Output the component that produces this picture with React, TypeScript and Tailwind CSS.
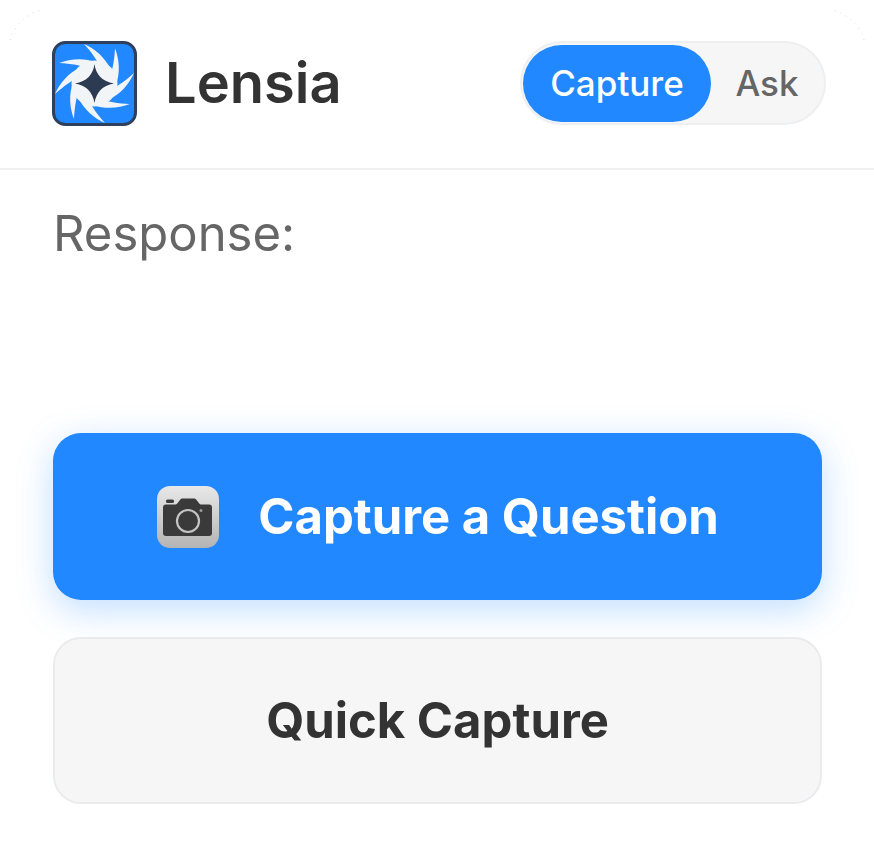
const font = { fontFamily: "Inter, 'Noto Sans', sans-serif" };

function Logo() {
  return (
    <svg width="85" height="85" viewBox="0 0 85 85" className="shrink-0">
      <defs>
        <clipPath id="logo-clip">
          <rect x="1.5" y="1.5" width="82" height="82" rx="12" />
        </clipPath>
      </defs>
      <rect x="1.5" y="1.5" width="82" height="82" rx="12" fill="#2188ff" />
      <g clipPath="url(#logo-clip)">
        <circle cx="42.5" cy="42.5" r="23" fill="#f2f5f8" />
        {[0, 45, 90, 135, 180, 225, 270, 315].map((a) => (
          <path
            key={a}
            d="M32 3 C 43 8 53 16 59 29 L 50 30 C 46 20 40 12 32 3 Z"
            transform={`rotate(${a} 42.5 42.5)`}
            fill="#f2f5f8"
          />
        ))}
      </g>
      <path
        d="M42.5 23 C 44 34 50 40 62 42.5 C 50 45 44.500 51 42.500 62 C 40.500 51 35 45 23 42.500 C 35 40 41 34 42.500 23 Z"
        fill="#2d3b52"
      />
      <rect x="1.500" y="1.500" width="82" height="82" rx="12" fill="none" stroke="#2f405c" strokeWidth="3" />
    </svg>
  );
}

function CameraIcon() {
  return (
    <svg width="64" height="64" viewBox="0 0 64 64" className="shrink-0">
      <defs>
        <linearGradient id="cam-bg" x1="0" y1="0" x2="0" y2="1">
          <stop offset="0" stopColor="#e8e8e8" />
          <stop offset="1" stopColor="#b4b4b4" />
        </linearGradient>
      </defs>
      <rect x="1" y="1" width="62" height="62" rx="13" fill="url(#cam-bg)" />
      <rect x="10" y="14.500" width="8" height="3.500" rx="1.500" fill="#3a3a3a" />
      <path
        d="M10 19.500 H19 C20.500 19.500 21 19 22 17.500 L24 15 C24.600 14 25.400 13.500 26.500 13.500 H38 C39 13.500 39.800 14 40.500 15 L42.500 17.500 C43.500 19 44 19.500 45.500 19.500 H53 C55 19.500 56 20.500 56 22.500 V48 C56 50 55 51 53 51 H10 C8 51 7 50 7 48 V22.500 C7 20.500 8 19.500 10 19.500 Z"
        fill="#3a3a3a"
      />
      <circle cx="32" cy="36" r="11" fill="none" stroke="#c4c4c4" strokeWidth="2.200" />
      <circle cx="45" cy="25.500" r="1.500" fill="#9a9a9a" />
    </svg>
  );
}

function CornerDots({ flip }: { flip?: boolean }) {
  return (
    <svg
      width="50"
      height="50"
      viewBox="0 0 50 50"
      className={flip ? "absolute top-0 right-0 -scale-x-100" : "absolute top-0 left-0"}
    >
      <path d="M10 40 C 14 26 26 14 41 10" fill="none" stroke="#dcdcdc" strokeWidth="1" strokeDasharray="1 5" />
    </svg>
  );
}

export default function App() {
  return (
    <div className="relative w-[874px] h-[856px] bg-white overflow-hidden" style={font}>
      <CornerDots />
      <CornerDots flip />
      <header className="h-[170px] border-b-2 border-[#eeeff1] pl-[52px] pr-[48px] pb-[2px] flex items-center justify-between">
        <div className="flex items-center gap-[28px]">
          <Logo />
          <span className="text-[56px] leading-none font-semibold text-[#333333]">Lensia</span>
        </div>
        <div className="h-[84px] w-[306px] rounded-full bg-[#f6f6f7] border-2 border-[#eeeff1] pl-[1px] flex items-center">
          <div className="w-[188px] h-[77px] rounded-full bg-[#2188ff] text-white text-[35px] font-medium flex items-center justify-center">
            Capture
          </div>
          <div className="flex-1 text-[35px] font-medium text-[#666666] text-center pr-[1px]">Ask</div>
        </div>
      </header>
      <main className="px-[53px] pt-[34px]">
        <p className="text-[49px] leading-[60px] text-[#666666]">Response:</p>
        <button className="mt-[169px] w-[769px] h-[167px] rounded-[28px] bg-[#2188ff] text-white text-[49px] font-bold flex items-center justify-center gap-[38px] shadow-[0_10px_36px_rgba(33,136,255,0.28)]">
          <CameraIcon />
          <span>Capture a Question</span>
        </button>
        <button className="mt-[37px] w-[769px] h-[167px] rounded-[28px] bg-[#f6f6f7] border-2 border-[#eaebed] text-[#333333] text-[49px] font-bold flex items-center justify-center">
          <span>Quick Capture</span>
        </button>
      </main>
    </div>
  );
}
